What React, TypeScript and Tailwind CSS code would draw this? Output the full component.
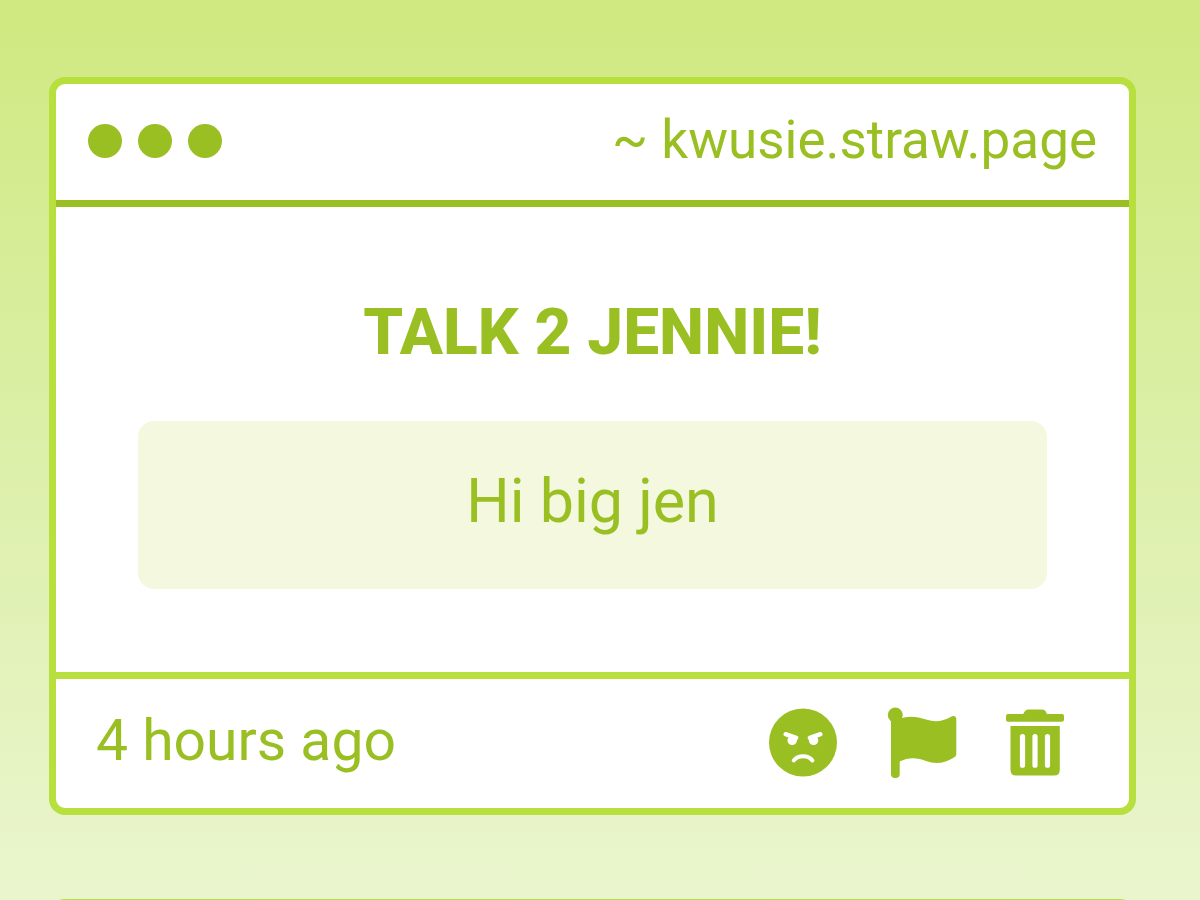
import type { ReactNode } from "react";

interface ActionButtonProps {
  label: string
  children: ReactNode
}

function ActionButton({ label, children }: ActionButtonProps) {
  return (
    <button type="button" aria-label={label} className="cursor-pointer">
      <svg viewBox="0 0 72 72" className="size-18" fill="currentColor" aria-hidden="true">
        {children}
      </svg>
    </button>
  )
}

function AngryIcon() {
  return (
    <>
      <circle cx="36" cy="35.5" r="34" />
      <g fill="none" stroke="white" strokeLinecap="round">
        <path d="M18.6 27.2 29.2 30.8" strokeWidth="4.4" />
        <path d="M53.4 27.2 42.8 30.8" strokeWidth="4.4" />
        <path d="M26.8 53.4C31 47.8 41 47.8 45.4 53.4" strokeWidth="4" />
      </g>
      <circle cx="25.2" cy="33.4" r="4.7" fill="white" />
      <circle cx="46.6" cy="33.4" r="4.7" fill="white" />
    </>
  )
}

function FlagIcon() {
  return (
    <>
      <circle cx="9.3" cy="8" r="7.5" />
      <rect x="5" y="8" width="8.7" height="63" rx="4" />
      <path d="M13 12.3C24 7.8 33 10.5 41 12.8C49 15.4 57 14.6 65 9.8C67.5 8.2 70.3 9 70.3 12V46.5C70.3 49 69.5 49.6 68 50.5C57 57 49 57 40 54C31 50.5 23 49.8 13 54.8Z" />
    </>
  )
}

function TrashIcon() {
  return (
    <>
      <path d="M3 6.9H18.2L20 4Q21 2.4 23 2.4H37.5Q39.5 2.4 40.5 4L42 6.9H57Q59 6.9 59 8.9V12.7Q59 14.7 57 14.7H3Q1 14.7 1 12.7V8.9Q1 6.9 3 6.9Z" />
      <path d="M5.5 19H54.8V63Q54.8 68.6 49.2 68.6H11Q5.5 68.6 5.5 63Z" />
      <g stroke="white" strokeWidth="5.2" strokeLinecap="round">
        <path d="M17.5 29.5V58.2M30 29.5V58.2M42.5 29.5V58.2" />
      </g>
    </>
  )
}

export default function App() {
  return (
    <main className="h-screen overflow-hidden bg-linear-to-b from-[#cfe97f] to-[#eaf5ce] pt-[77px] pr-16 pl-[49px] font-['Roboto',sans-serif] text-[#9abf23]">
      <article className="rounded-2xl border-[7px] border-[#b7df3e] bg-white">
        <header className="flex h-[123px] items-center justify-between border-b-[7px] border-[#9abf23] px-8">
          <div className="flex gap-4 pb-0.5">
            <span className="size-[34px] rounded-full bg-[#9abf23]" />
            <span className="size-[34px] rounded-full bg-[#9abf23]" />
            <span className="size-[34px] rounded-full bg-[#9abf23]" />
          </div>
          <a href="#" className="pb-1 text-[53px] leading-[64px]">~ kwusie.straw.page</a>
        </header>

        <div className="px-[82px] pt-[82px] pb-[83px] text-center">
          <h1 className="mb-11 text-[64px] leading-[88px] font-extrabold">TALK 2 JENNIE!</h1>
          <p className="rounded-2xl bg-[#f4f8df] pt-12 pb-14 text-[61px] leading-[64px]">Hi big jen</p>
        </div>

        <footer className="flex h-[136px] items-center justify-between border-t-[7px] border-[#b7df3e] pr-[52px] pb-0.5 pl-10">
          <time className="pb-1 text-[57px] leading-[64px]">4 hours ago</time>
          <div className="flex gap-[47px]">
            <ActionButton label="Block"><AngryIcon /></ActionButton>
            <ActionButton label="Report"><FlagIcon /></ActionButton>
            <ActionButton label="Delete"><TrashIcon /></ActionButton>
          </div>
        </footer>
      </article>

      <article className="mt-21 h-40 rounded-2xl border-[7px] border-[#b7df3e] bg-white" />
    </main>
  )
}
